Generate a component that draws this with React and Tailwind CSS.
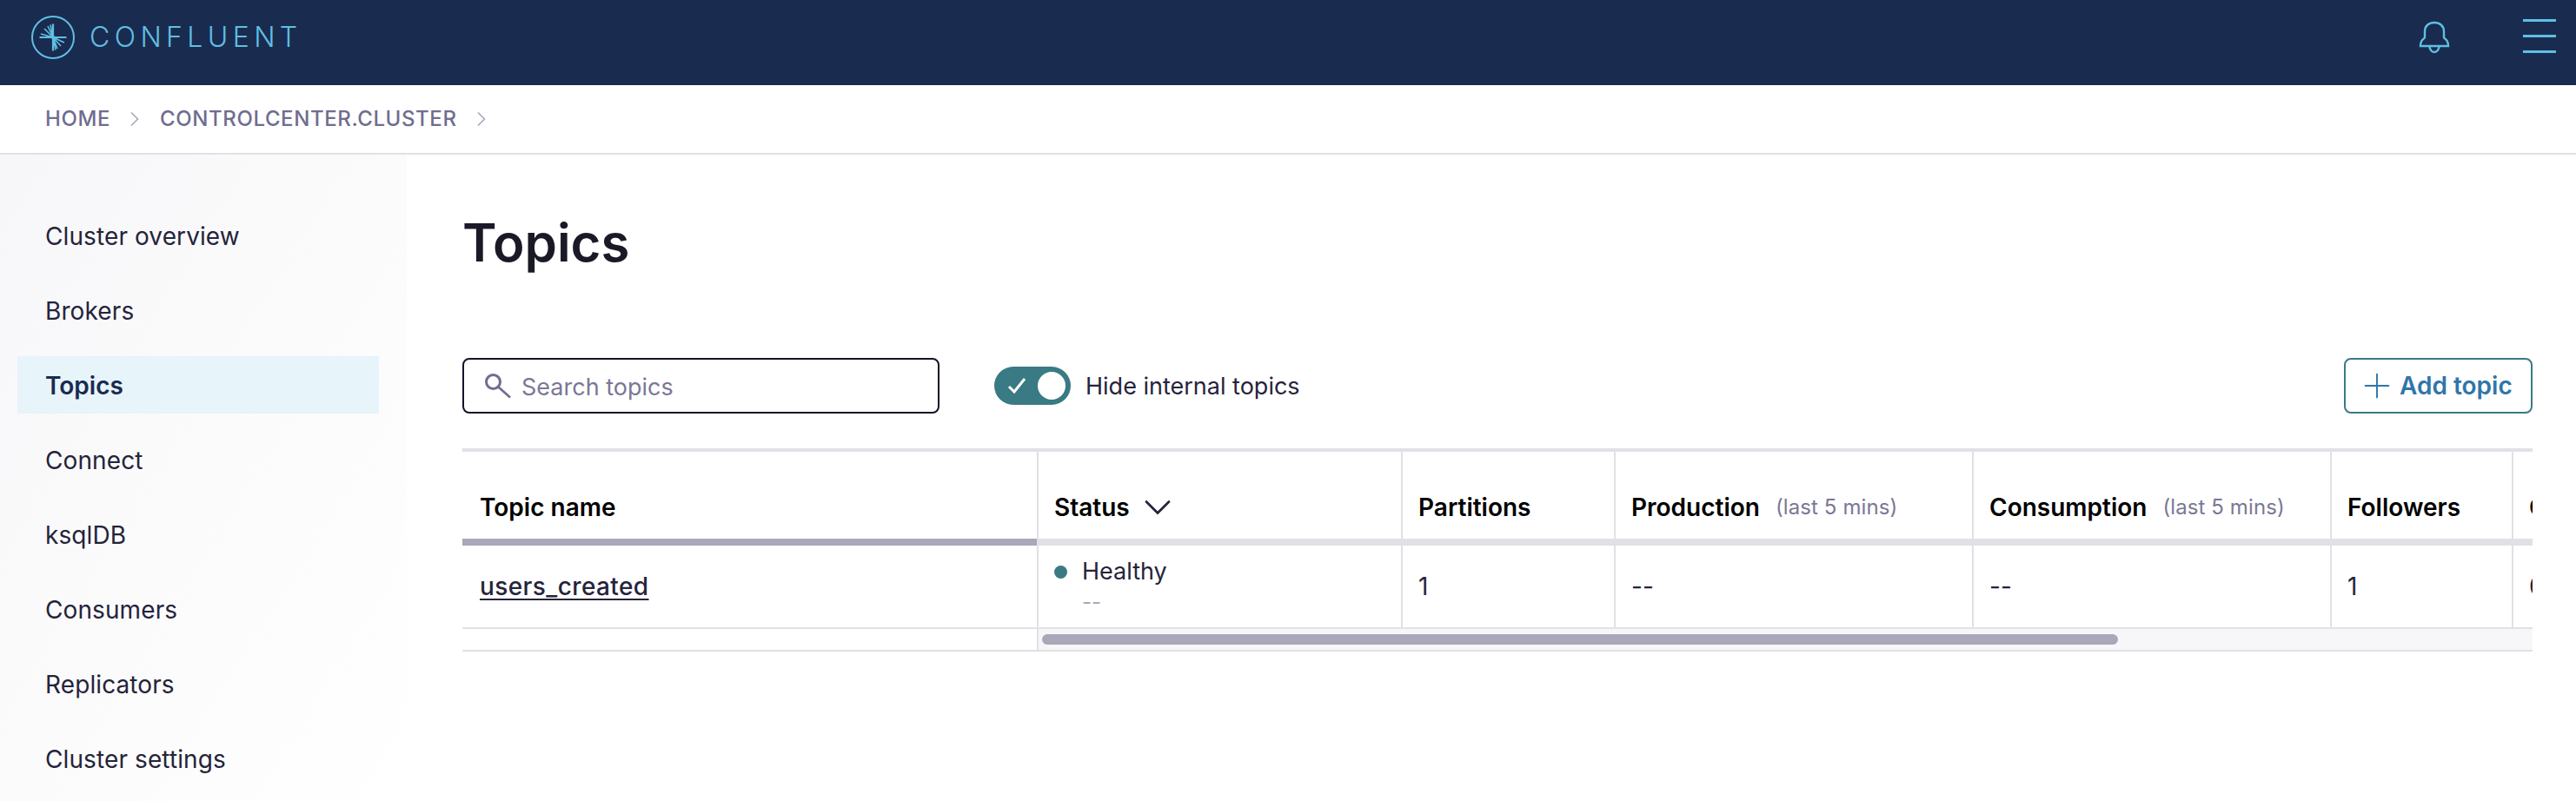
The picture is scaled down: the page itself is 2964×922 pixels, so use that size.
import { ChevronDown, ChevronRight, Plus } from 'lucide-react'

const NAV_ITEMS = [
  'Cluster overview',
  'Brokers',
  'Topics',
  'Connect',
  'ksqlDB',
  'Consumers',
  'Replicators',
  'Cluster settings',
]

function Logo() {
  return (
    <svg width="52" height="52" viewBox="0 0 52 52" fill="none" stroke="#5fbfe2">
      <circle cx="26" cy="26" r="24" strokeWidth="2" />
      <path d="M26 10.5V41.5M10.5 26H41.5" strokeWidth="2.2" />
      <path d="M26 26L20 13M26 26L23 11.5M26 26L16 16M26 26L12 22M26 26L31 39M26 26L29 40.5M26 26L35 36M26 26L39 32" strokeWidth="1.6" />
      <path d="M26 23L29 26L26 29L23 26Z" fill="#5fbfe2" stroke="none" />
    </svg>
  )
}

function BellIcon() {
  return (
    <svg width="36" height="38" viewBox="0 0 36 38" fill="none" stroke="#5fbfe2" strokeWidth="2.4" className="ml-auto">
      <path d="M7 19V12C7 6 11.5 2 18 2S29 6 29 12V19C29 21 34 20 34 29H2C2 20 7 21 7 19Z" />
      <path d="M12.5 29C12.5 33 15 36 18 36S23.5 33 23.5 29" />
    </svg>
  )
}

function SearchIcon() {
  return (
    <svg width="32" height="30" viewBox="0 0 32 30" fill="none" stroke="#6f6d8f" className="shrink-0">
      <circle cx="10.5" cy="10.5" r="8" strokeWidth="3" />
      <path d="M16.5 16.5L30 28.5" strokeWidth="2.6" />
    </svg>
  )
}

function Breadcrumb({ children }) {
  return (
    <>
      <span>{children}</span>
      <ChevronRight size={28} strokeWidth={1.5} className="ml-[14px] mr-[15px] text-[#a9a8b8]" />
    </>
  )
}

function Sidebar() {
  return (
    <aside className="w-[468px] shrink-0 overflow-hidden bg-gradient-to-br from-[#f7f7f9] via-[#fbfbfc] to-white pt-[60px]">
      {NAV_ITEMS.map((item) => (
        <div
          key={item}
          className={
            item === 'Topics'
              ? 'mx-[20px] mb-[20px] flex h-[66px] w-[416px] items-center bg-[#e7f4fa] pl-[32px] pt-[2px] text-[28px] font-semibold text-[#1a2b50]'
              : 'mx-[20px] mb-[20px] flex h-[66px] w-[416px] items-center pl-[32px] pt-[2px] text-[28px] tracking-[0.1px] text-[#25243a]'
          }
        >
          {item}
        </div>
      ))}
    </aside>
  )
}

function Cell({ className = '', children }) {
  return <div className={`flex shrink-0 items-center border-l-2 border-[#e1e0e7] pl-[18px] ${className}`}>{children}</div>
}

function TopicsTable() {
  return (
    <div className="mt-[40px] w-[2382px] overflow-hidden border-t-4 border-[#e1e0e7]">
      <div className="flex h-[100px] items-center text-[28px] font-semibold text-black">
        <div className="flex h-full w-[661px] shrink-0 items-center pl-[20px] pt-[28px]">Topic name</div>
        <Cell className="h-full w-[419px] pt-[28px]">
          Status
          <ChevronDown size={52} strokeWidth={1.3} className="ml-[6px] text-[#25243a]" />
        </Cell>
        <Cell className="h-full w-[245px] pt-[28px]">Partitions</Cell>
        <Cell className="h-full w-[412px] pt-[28px]">
          Production
          <span className="ml-[18px] text-[24px] font-normal tracking-[0.1px] text-[#7a7895]">(last 5 mins)</span>
        </Cell>
        <Cell className="h-full w-[412px] pt-[28px]">
          Consumption
          <span className="ml-[18px] text-[24px] font-normal tracking-[0.1px] text-[#7a7895]">(last 5 mins)</span>
        </Cell>
        <Cell className="h-full w-[209px] pt-[28px]">Followers</Cell>
        <Cell className="h-full w-[200px] pt-[28px]">Observers</Cell>
      </div>
      <div className="flex h-[8px]">
        <div className="w-[661px] shrink-0 bg-[#a9a8b8]" />
        <div className="flex-1 bg-[#e1e0e7]" />
      </div>
      <div className="flex h-[94px] items-center text-[28px] text-[#25243a]">
        <div className="flex h-full w-[661px] shrink-0 items-center pl-[20px] font-medium tracking-[0.4px] underline underline-offset-4">users_created</div>
        <Cell className="h-full w-[419px] pb-[4px]">
          <div>
            <div className="flex items-center text-[27px]">
              <span className="mr-[17px] h-[15px] w-[15px] rounded-full bg-[#3a7a84]" />
              Healthy
            </div>
            <div className="pl-[32px] text-[24px] leading-[30px] text-[#a9a8b8]">--</div>
          </div>
        </Cell>
        <Cell className="h-full w-[245px]">1</Cell>
        <Cell className="h-full w-[412px]">--</Cell>
        <Cell className="h-full w-[412px]">--</Cell>
        <Cell className="h-full w-[209px]">1</Cell>
        <Cell className="h-full w-[200px]">0</Cell>
      </div>
      <div className="flex h-[28px] border-y-2 border-[#e1e0e7]">
        <div className="w-[661px] shrink-0" />
        <div className="flex flex-1 items-center border-l-2 border-[#e1e0e7] bg-[#f7f7f9] pl-[4px]">
          <div className="h-[12px] w-[1238px] rounded-full bg-[#a9a8b8]" />
        </div>
      </div>
    </div>
  )
}

export default function App() {
  return (
    <div className="flex h-[922px] w-[2964px] flex-col overflow-hidden bg-white font-['Inter',sans-serif]">
      <header className="flex h-[98px] shrink-0 items-center bg-[#1a2b50] pb-[12px] pl-[35px] pr-[23px] text-[#5fbfe2]">
        <Logo />
        <span className="ml-[16px] text-[32px] font-[350] tracking-[5.4px]">CONFLUENT</span>
        <BellIcon />
        <div className="mb-[3px] ml-[84px] flex w-[38px] flex-col gap-[15px]">
          <div className="h-[3px] bg-[#5fbfe2]" />
          <div className="h-[3px] bg-[#5fbfe2]" />
          <div className="h-[3px] bg-[#5fbfe2]" />
        </div>
      </header>
      <nav className="flex h-[80px] shrink-0 items-center border-b-2 border-[#e1e0e7] pl-[52px] text-[24px] font-medium tracking-[0.6px] text-[#6f6d8f]">
        <Breadcrumb>HOME</Breadcrumb>
        <Breadcrumb>CONTROLCENTER.CLUSTER</Breadcrumb>
      </nav>
      <div className="flex min-h-0 flex-1">
        <Sidebar />
        <main className="min-w-0 flex-1 pl-[64px] pt-[62px]">
          <h1 className="text-[60px] font-semibold leading-[78px] text-[#1a1a27]">Topics</h1>
          <div className="mt-[94px] flex h-[64px] w-[2382px] items-center">
            <div className="flex h-full w-[549px] items-center rounded-[8px] border-2 border-[#14132a] pl-[23px]">
              <SearchIcon />
              <span className="ml-[11px] pt-[4px] text-[27px] text-[#7a7895]">Search topics</span>
            </div>
            <div className="ml-[63px] flex h-[44px] w-[88px] items-center rounded-full bg-[#3a7a84] pl-[15px]">
              <svg width="22" height="20" viewBox="0 0 22 20" fill="none" stroke="white" strokeWidth="3" className="shrink-0">
                <path d="M2 11L8 17L20 2" />
              </svg>
              <span className="ml-[13px] h-[32px] w-[32px] rounded-full bg-white" />
            </div>
            <span className="ml-[17px] pt-[2px] text-[27px] text-[#25243a]">Hide internal topics</span>
            <button className="ml-auto flex h-full w-[217px] items-center rounded-[8px] border-2 border-[#3a7a84] pl-[13px] text-[28px] font-semibold text-[#2f76a8]">
              <Plus size={46} strokeWidth={1} className="mr-[3px]" />
              Add topic
            </button>
          </div>
          <TopicsTable />
        </main>
      </div>
    </div>
  )
}
